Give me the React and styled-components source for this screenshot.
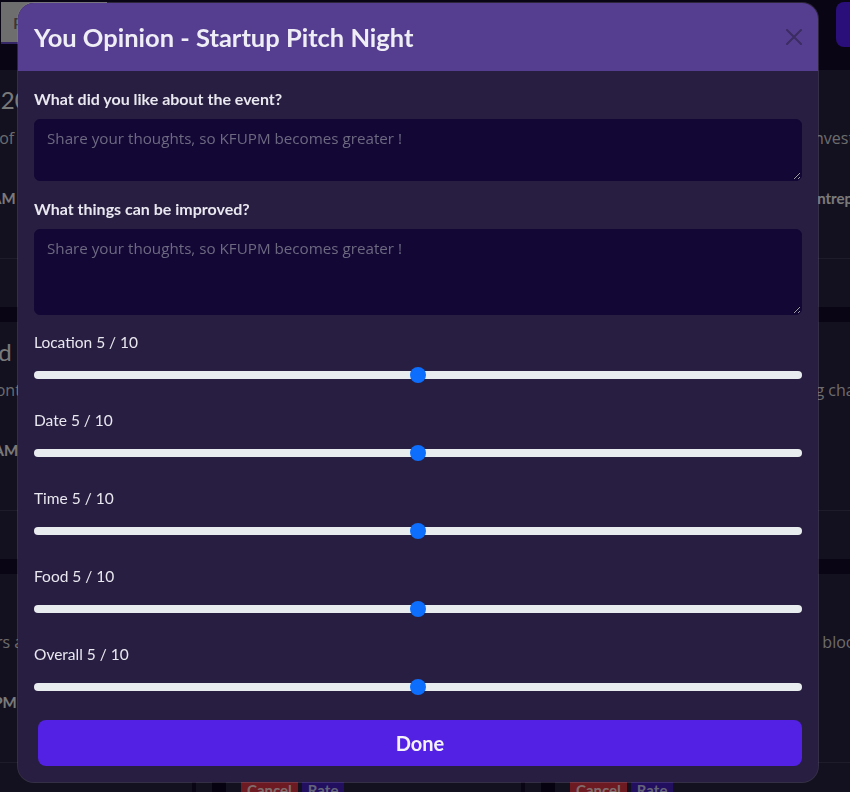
import React, { useState } from 'react';
import styled, { createGlobalStyle } from 'styled-components';

const GlobalStyle = createGlobalStyle`
  html, body { margin: 0; padding: 0; }
  body {
    background: #140a28;
    font-family: Lato, "Noto Sans", sans-serif;
    overflow: hidden;
    height: 792px;
  }
  * { box-sizing: border-box; }
`;

/* ---------- page behind the dialog ---------- */

const Page = styled.div`
  height: 792px;
  overflow: hidden;
`;

const Nav = styled.nav`
  display: flex;
  align-items: flex-start;
  justify-content: space-between;
  padding: 2px 0 0 1px;
  height: 70px;
`;

const TabButton = styled.button`
  height: 42px;
  padding: 0 12px;
  border: 0;
  border-bottom: 2px solid #6a4cd0;
  background: #dcdcdc;
  color: #6e6e6e;
  font: 600 16px Lato, sans-serif;
`;

const AddButton = styled.button`
  height: 45px;
  width: 120px;
  margin-right: -106px;
  border: 0;
  border-radius: 8px;
  background: #541ef4;
  color: #fff;
  font: 700 16px Lato, sans-serif;
`;

const CardGrid = styled.div`
  display: grid;
  grid-template-columns: repeat(3, 325px);
  column-gap: 4px;
  row-gap: 15px;
  margin-left: -133px;
`;

const Card = styled.article`
  display: flex;
  flex-direction: column;
  height: 237px;
  background: #262040;
  color: #eee;
`;

const CardBody = styled.div`
  flex: 1;
  padding: 14px 16px 0;
  border-bottom: 1px solid #3c3654;
`;

const CardTitle = styled.h3`
  margin: 0 0 10px;
  font: 400 24px/32px Lato, sans-serif;
  color: #f2f2f2;
  white-space: nowrap;
`;

const CardText = styled.p`
  margin: 0 0 38px;
  font: 400 16px/24px "Open Sans", sans-serif;
  color: #d8d8d8;
  white-space: nowrap;
`;

const CardMeta = styled.p`
  margin: 0;
  font: 700 15px/20px Lato, sans-serif;
  color: #f4f4f4;
  white-space: nowrap;
`;

const CardFooter = styled.div`
  display: flex;
  align-items: flex-start;
  height: 48px;
  padding: 15px 16px 0;
`;

const Dot = styled.span`
  width: 14px;
  height: 20px;
  margin: 4px 15px 0 0;
  background: #0e041e;
`;

const SmallButton = styled.button`
  display: flex;
  align-items: flex-start;
  height: 28px;
  margin-right: 4px;
  padding: 2px 6px 0;
  border: 0;
  background: ${({ $tone }) => ($tone === 'danger' ? '#dc3545' : '#441fc0')};
  color: ${({ $tone }) => ($tone === 'danger' ? '#ffd9d9' : '#c8c8f0')};
  font: 700 15px/20px Lato, sans-serif;
`;

const events = [
  { title: 'Demo Day 2024', text: 'The showcases of the brightest student ideas', meta: 'Oct 12 at 09:00 AM' },
  { title: 'AI Workshop', text: 'Hands-on machine learning', meta: 'Oct 14 · 10:00 AM', canRate: true },
  { title: 'Startup Pitch Night', text: 'Pitch your own startup ideas to real investors and mentors', meta: 'Hosted inside Building 2 by the KFUPM Entrepreneurship Club', canRate: true },
  { title: 'AI Weekend', text: 'Paintings and content by students', meta: 'Nov 03 at 10:30 AM' },
  { title: 'Coding Contest', text: 'Solve problems fast', meta: 'Nov 05 · 01:00 PM', canRate: true },
  { title: 'Green Campus', text: 'Talks on climates, energy and growing challenges', meta: 'Nov 08', canRate: true },
  { title: 'Open Mic', text: 'See the founders and speakers', meta: 'Dec 01 at 08:00 PM' },
  { title: 'Robotics Meetup', text: 'Build and race robots', meta: 'Dec 04', canRate: true },
  { title: 'Web3 Talk', text: 'An introduction to the crypto and the blockchain', meta: 'Dec 09', canRate: true },
];

/* ---------- dialog ---------- */

const Backdrop = styled.div`
  position: fixed;
  inset: 0;
  background: rgba(0, 0, 0, 0.5);
  padding: 3px 0 0 18px;
`;

const Dialog = styled.div`
  width: 800px;
  background: #281e41;
  border-radius: 16px;
  overflow: hidden;
  box-shadow: 0 0 0 1px rgba(150, 140, 175, 0.25);
`;

const Header = styled.header`
  display: flex;
  align-items: center;
  justify-content: space-between;
  height: 68px;
  padding: 0 16px;
  background: #553e8f;
`;

const Title = styled.h2`
  margin: 0;
  font: 700 25.5px/30px Lato, sans-serif;
  color: #efedf5;
`;

const CloseButton = styled.button`
  display: flex;
  width: 16px;
  height: 16px;
  padding: 0;
  border: 0;
  background: none;
  cursor: pointer;
`;

const Body = styled.div`
  padding: 16px;
`;

const Field = styled.div`
  margin-bottom: ${({ $gap }) => $gap}px;
`;

const Label = styled.label`
  display: block;
  margin-bottom: ${({ $strong }) => ($strong ? 8 : 9)}px;
  font-family: Lato, sans-serif;
  font-weight: ${({ $strong }) => ($strong ? 700 : 400)};
  font-size: ${({ $strong }) => ($strong ? 16 : 15.5)}px;
  line-height: 24px;
  color: #e9e7ef;
`;

const TextArea = styled.textarea`
  display: block;
  width: 100%;
  padding: 6px 12px;
  border: 1px solid #130735;
  border-radius: 6px;
  background: #130735;
  color: #e9e7ef;
  font: 400 15.2px/24px "Open Sans", sans-serif;
  resize: vertical;
  &::placeholder { color: #6d6981; }
  &:focus { outline: none; }
`;

const Range = styled.input`
  display: block;
  width: 100%;
  height: 24px;
  margin: 0;
  background: transparent;
  appearance: none;
  -webkit-appearance: none;
  &::-webkit-slider-runnable-track {
    height: 8px;
    border-radius: 4px;
    background: #e9ecef;
  }
  &::-webkit-slider-thumb {
    -webkit-appearance: none;
    width: 16px;
    height: 16px;
    margin-top: -4px;
    border: 0;
    border-radius: 50%;
    background: #0d6efd;
  }
  &:focus { outline: none; }
`;

const DoneButton = styled.button`
  display: block;
  width: calc(100% - 4px);
  height: 46px;
  margin: 1px 0 0 4px;
  border: 0;
  border-radius: 8px;
  background: #5321e3;
  color: #f4f2fb;
  font: 700 20px Lato, sans-serif;
  cursor: pointer;
`;

const criteria = ['Location', 'Date', 'Time', 'Food', 'Overall'];

function CloseIcon() {
  return (
    <svg width="16" height="16" viewBox="0 0 16 16">
      <path d="M1 1 L15 15 M15 1 L1 15" stroke="#3b2c62" strokeWidth="2" strokeLinecap="round" />
    </svg>
  );
}

export default function App() {
  const [scores, setScores] = useState({ Location: 5, Date: 5, Time: 5, Food: 5, Overall: 5 });

  return (
    <>
      <GlobalStyle />
      <Page>
        <Nav>
          <TabButton>Past Events</TabButton>
          <AddButton>+ New</AddButton>
        </Nav>
        <CardGrid>
          {events.map((ev) => (
            <Card key={ev.title}>
              <CardBody>
                <CardTitle>{ev.title}</CardTitle>
                <CardText>{ev.text}</CardText>
                <CardMeta>{ev.meta}</CardMeta>
              </CardBody>
              <CardFooter>
                {ev.canRate && (
                  <>
                    <Dot />
                    <SmallButton $tone="danger">Cancel</SmallButton>
                    <SmallButton>Rate</SmallButton>
                  </>
                )}
              </CardFooter>
            </Card>
          ))}
        </CardGrid>
      </Page>

      <Backdrop>
        <Dialog role="dialog">
          <Header>
            <Title>You Opinion - Startup Pitch Night</Title>
            <CloseButton aria-label="Close">
              <CloseIcon />
            </CloseButton>
          </Header>
          <Body>
            <Field $gap={16}>
              <Label $strong>What did you like about the event?</Label>
              <TextArea rows={2} placeholder="Share your thoughts, so KFUPM becomes greater !" />
            </Field>
            <Field $gap={15}>
              <Label $strong>What things can be improved?</Label>
              <TextArea rows={3} placeholder="Share your thoughts, so KFUPM becomes greater !" />
            </Field>
            {criteria.map((name) => (
              <Field key={name} $gap={21}>
                <Label>
                  {name} {scores[name]} / 10
                </Label>
                <Range
                  type="range"
                  min={0}
                  max={10}
                  value={scores[name]}
                  onChange={(e) => setScores({ ...scores, [name]: Number(e.target.value) })}
                />
              </Field>
            ))}
            <DoneButton>Done</DoneButton>
          </Body>
        </Dialog>
      </Backdrop>
    </>
  );
}
